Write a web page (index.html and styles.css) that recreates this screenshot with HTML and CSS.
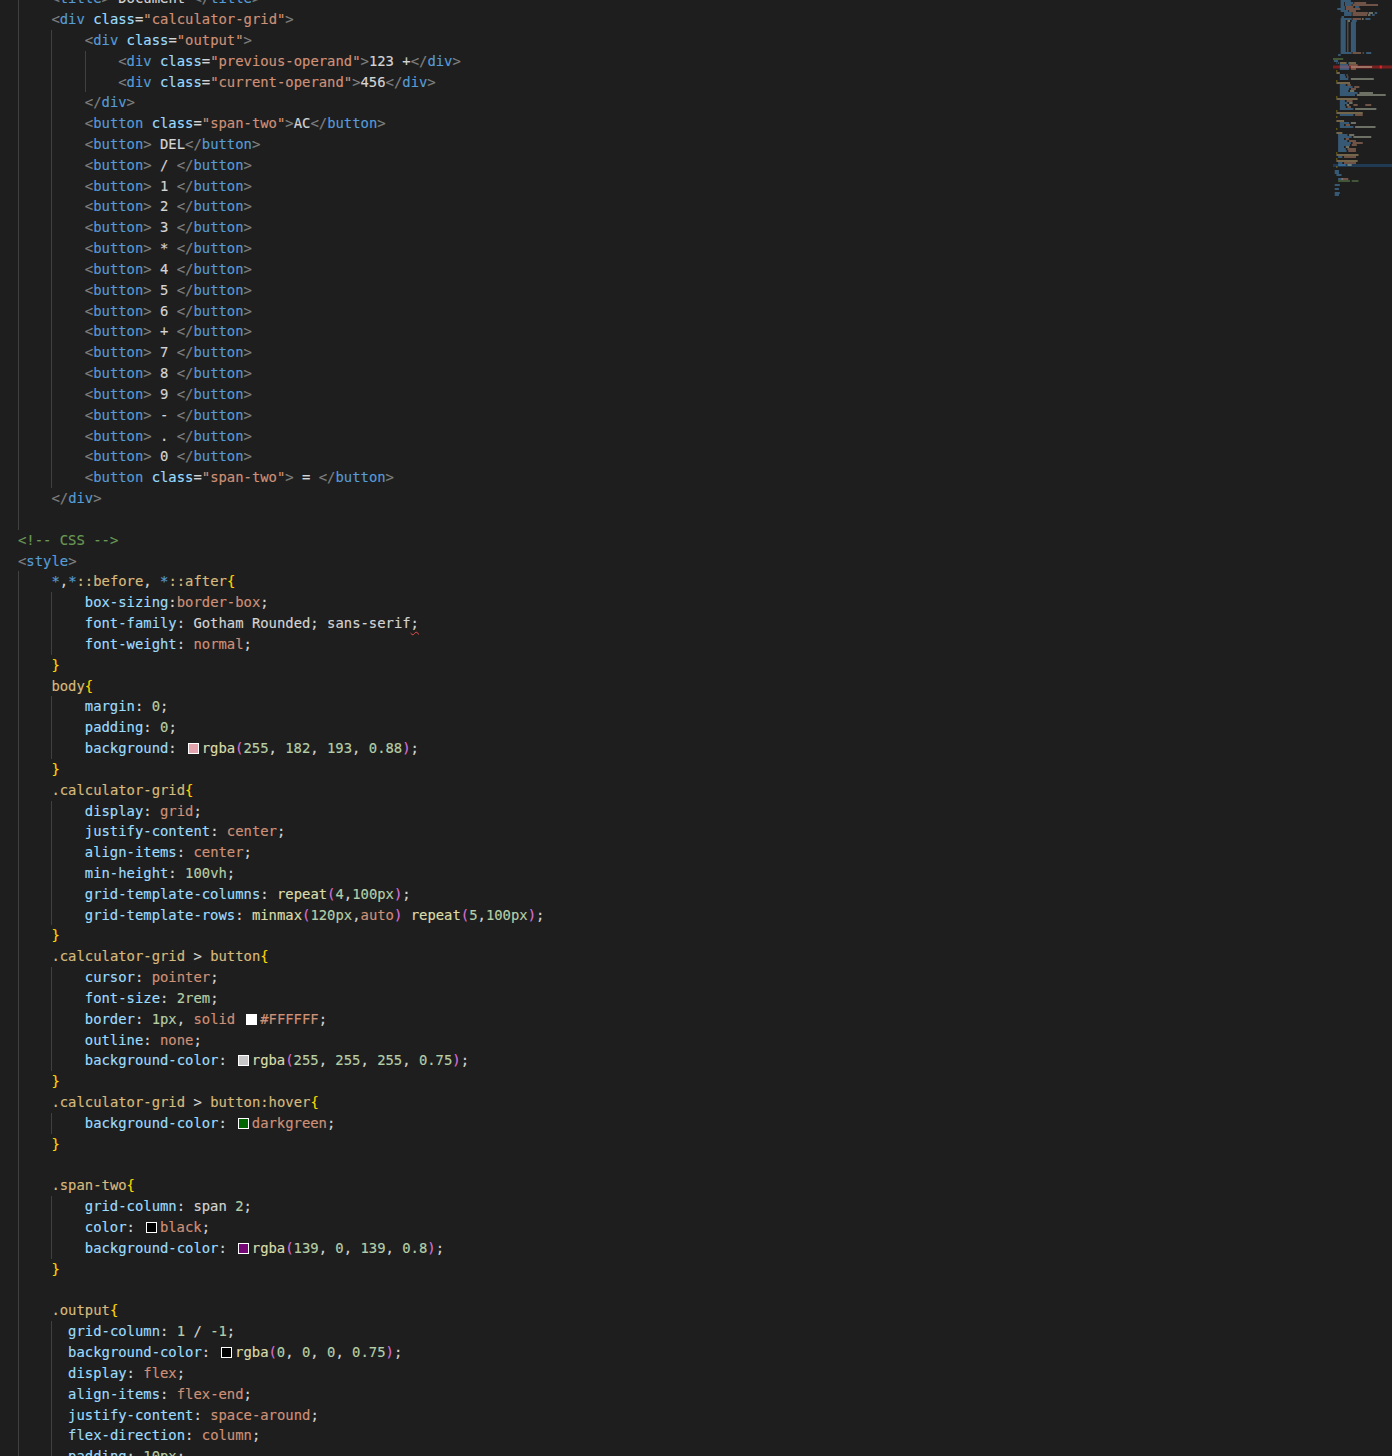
FILE: index.html
```html
<!DOCTYPE html>
<html lang="en">
<head>
<meta charset="utf-8">
<title>Document</title>
<link rel="stylesheet" href="styles.css">
</head>
<body>
<main class="editor">
<div class="code">
<div class="line"><i class="g"></i><i class="t">&lt;</i><i class="n">title</i><i class="t">&gt;</i> Document <i class="t">&lt;/</i><i class="n">title</i><i class="t">&gt;</i></div>
<div class="line"><i class="g"></i><i class="t">&lt;</i><i class="n">div</i> <i class="a">class</i>=<i class="s">"calculator-grid"</i><i class="t">&gt;</i></div>
<div class="line"><i class="g"></i><i class="g"></i><i class="t">&lt;</i><i class="n">div</i> <i class="a">class</i>=<i class="s">"output"</i><i class="t">&gt;</i></div>
<div class="line"><i class="g"></i><i class="g"></i><i class="g"></i><i class="t">&lt;</i><i class="n">div</i> <i class="a">class</i>=<i class="s">"previous-operand"</i><i class="t">&gt;</i>123 +<i class="t">&lt;/</i><i class="n">div</i><i class="t">&gt;</i></div>
<div class="line"><i class="g"></i><i class="g"></i><i class="g"></i><i class="t">&lt;</i><i class="n">div</i> <i class="a">class</i>=<i class="s">"current-operand"</i><i class="t">&gt;</i>456<i class="t">&lt;/</i><i class="n">div</i><i class="t">&gt;</i></div>
<div class="line"><i class="g"></i><i class="g"></i><i class="t">&lt;/</i><i class="n">div</i><i class="t">&gt;</i></div>
<div class="line"><i class="g"></i><i class="g"></i><i class="t">&lt;</i><i class="n">button</i> <i class="a">class</i>=<i class="s">"span-two"</i><i class="t">&gt;</i>AC<i class="t">&lt;/</i><i class="n">button</i><i class="t">&gt;</i></div>
<div class="line"><i class="g"></i><i class="g"></i><i class="t">&lt;</i><i class="n">button</i><i class="t">&gt;</i> DEL<i class="t">&lt;/</i><i class="n">button</i><i class="t">&gt;</i></div>
<div class="line"><i class="g"></i><i class="g"></i><i class="t">&lt;</i><i class="n">button</i><i class="t">&gt;</i> / <i class="t">&lt;/</i><i class="n">button</i><i class="t">&gt;</i></div>
<div class="line"><i class="g"></i><i class="g"></i><i class="t">&lt;</i><i class="n">button</i><i class="t">&gt;</i> 1 <i class="t">&lt;/</i><i class="n">button</i><i class="t">&gt;</i></div>
<div class="line"><i class="g"></i><i class="g"></i><i class="t">&lt;</i><i class="n">button</i><i class="t">&gt;</i> 2 <i class="t">&lt;/</i><i class="n">button</i><i class="t">&gt;</i></div>
<div class="line"><i class="g"></i><i class="g"></i><i class="t">&lt;</i><i class="n">button</i><i class="t">&gt;</i> 3 <i class="t">&lt;/</i><i class="n">button</i><i class="t">&gt;</i></div>
<div class="line"><i class="g"></i><i class="g"></i><i class="t">&lt;</i><i class="n">button</i><i class="t">&gt;</i> * <i class="t">&lt;/</i><i class="n">button</i><i class="t">&gt;</i></div>
<div class="line"><i class="g"></i><i class="g"></i><i class="t">&lt;</i><i class="n">button</i><i class="t">&gt;</i> 4 <i class="t">&lt;/</i><i class="n">button</i><i class="t">&gt;</i></div>
<div class="line"><i class="g"></i><i class="g"></i><i class="t">&lt;</i><i class="n">button</i><i class="t">&gt;</i> 5 <i class="t">&lt;/</i><i class="n">button</i><i class="t">&gt;</i></div>
<div class="line"><i class="g"></i><i class="g"></i><i class="t">&lt;</i><i class="n">button</i><i class="t">&gt;</i> 6 <i class="t">&lt;/</i><i class="n">button</i><i class="t">&gt;</i></div>
<div class="line"><i class="g"></i><i class="g"></i><i class="t">&lt;</i><i class="n">button</i><i class="t">&gt;</i> + <i class="t">&lt;/</i><i class="n">button</i><i class="t">&gt;</i></div>
<div class="line"><i class="g"></i><i class="g"></i><i class="t">&lt;</i><i class="n">button</i><i class="t">&gt;</i> 7 <i class="t">&lt;/</i><i class="n">button</i><i class="t">&gt;</i></div>
<div class="line"><i class="g"></i><i class="g"></i><i class="t">&lt;</i><i class="n">button</i><i class="t">&gt;</i> 8 <i class="t">&lt;/</i><i class="n">button</i><i class="t">&gt;</i></div>
<div class="line"><i class="g"></i><i class="g"></i><i class="t">&lt;</i><i class="n">button</i><i class="t">&gt;</i> 9 <i class="t">&lt;/</i><i class="n">button</i><i class="t">&gt;</i></div>
<div class="line"><i class="g"></i><i class="g"></i><i class="t">&lt;</i><i class="n">button</i><i class="t">&gt;</i> - <i class="t">&lt;/</i><i class="n">button</i><i class="t">&gt;</i></div>
<div class="line"><i class="g"></i><i class="g"></i><i class="t">&lt;</i><i class="n">button</i><i class="t">&gt;</i> . <i class="t">&lt;/</i><i class="n">button</i><i class="t">&gt;</i></div>
<div class="line"><i class="g"></i><i class="g"></i><i class="t">&lt;</i><i class="n">button</i><i class="t">&gt;</i> 0 <i class="t">&lt;/</i><i class="n">button</i><i class="t">&gt;</i></div>
<div class="line"><i class="g"></i><i class="g"></i><i class="t">&lt;</i><i class="n">button</i> <i class="a">class</i>=<i class="s">"span-two"</i><i class="t">&gt;</i> = <i class="t">&lt;/</i><i class="n">button</i><i class="t">&gt;</i></div>
<div class="line"><i class="g"></i><i class="t">&lt;/</i><i class="n">div</i><i class="t">&gt;</i></div>
<div class="line"><i class="g"></i></div>
<div class="line"><i class="c">&lt;!-- CSS --&gt;</i></div>
<div class="line"><i class="t">&lt;</i><i class="n">style</i><i class="t">&gt;</i></div>
<div class="line"><i class="g"></i><i class="n">*</i>,<i class="n">*</i><i class="l">::before</i>, <i class="n">*</i><i class="l">::after</i><i class="b">{</i></div>
<div class="line"><i class="g"></i><i class="g"></i><i class="a">box-sizing</i>:<i class="s">border-box</i>;</div>
<div class="line"><i class="g"></i><i class="g"></i><i class="a">font-family</i>: Gotham Rounded; sans-serif<i class="err">;</i></div>
<div class="line"><i class="g"></i><i class="g"></i><i class="a">font-weight</i>: <i class="s">normal</i>;</div>
<div class="line"><i class="g"></i><i class="b">}</i></div>
<div class="line"><i class="g"></i><i class="l">body</i><i class="b">{</i></div>
<div class="line"><i class="g"></i><i class="g"></i><i class="a">margin</i>: <i class="d">0</i>;</div>
<div class="line"><i class="g"></i><i class="g"></i><i class="a">padding</i>: <i class="d">0</i>;</div>
<div class="line"><i class="g"></i><i class="g"></i><i class="a">background</i>: <i class="sw sw-pink"></i><i class="f">rgba</i><i class="r">(</i><i class="d">255</i>, <i class="d">182</i>, <i class="d">193</i>, <i class="d">0.88</i><i class="r">)</i>;</div>
<div class="line"><i class="g"></i><i class="b">}</i></div>
<div class="line"><i class="g"></i><i class="l">.calculator-grid</i><i class="b">{</i></div>
<div class="line"><i class="g"></i><i class="g"></i><i class="a">display</i>: <i class="s">grid</i>;</div>
<div class="line"><i class="g"></i><i class="g"></i><i class="a">justify-content</i>: <i class="s">center</i>;</div>
<div class="line"><i class="g"></i><i class="g"></i><i class="a">align-items</i>: <i class="s">center</i>;</div>
<div class="line"><i class="g"></i><i class="g"></i><i class="a">min-height</i>: <i class="d">100vh</i>;</div>
<div class="line"><i class="g"></i><i class="g"></i><i class="a">grid-template-columns</i>: <i class="f">repeat</i><i class="r">(</i><i class="d">4</i>,<i class="d">100px</i><i class="r">)</i>;</div>
<div class="line"><i class="g"></i><i class="g"></i><i class="a">grid-template-rows</i>: <i class="f">minmax</i><i class="r">(</i><i class="d">120px</i>,<i class="s">auto</i><i class="r">)</i> <i class="f">repeat</i><i class="r">(</i><i class="d">5</i>,<i class="d">100px</i><i class="r">)</i>;</div>
<div class="line"><i class="g"></i><i class="b">}</i></div>
<div class="line"><i class="g"></i><i class="l">.calculator-grid</i> &gt; <i class="l">button</i><i class="b">{</i></div>
<div class="line"><i class="g"></i><i class="g"></i><i class="a">cursor</i>: <i class="s">pointer</i>;</div>
<div class="line"><i class="g"></i><i class="g"></i><i class="a">font-size</i>: <i class="d">2rem</i>;</div>
<div class="line"><i class="g"></i><i class="g"></i><i class="a">border</i>: <i class="d">1px</i>, <i class="s">solid</i> <i class="sw sw-white"></i><i class="s">#FFFFFF</i>;</div>
<div class="line"><i class="g"></i><i class="g"></i><i class="a">outline</i>: <i class="s">none</i>;</div>
<div class="line"><i class="g"></i><i class="g"></i><i class="a">background-color</i>: <i class="sw sw-grey"></i><i class="f">rgba</i><i class="r">(</i><i class="d">255</i>, <i class="d">255</i>, <i class="d">255</i>, <i class="d">0.75</i><i class="r">)</i>;</div>
<div class="line"><i class="g"></i><i class="b">}</i></div>
<div class="line"><i class="g"></i><i class="l">.calculator-grid</i> &gt; <i class="l">button:hover</i><i class="b">{</i></div>
<div class="line"><i class="g"></i><i class="g"></i><i class="a">background-color</i>: <i class="sw sw-green"></i><i class="s">darkgreen</i>;</div>
<div class="line"><i class="g"></i><i class="b">}</i></div>
<div class="line"><i class="g"></i></div>
<div class="line"><i class="g"></i><i class="l">.span-two</i><i class="b">{</i></div>
<div class="line"><i class="g"></i><i class="g"></i><i class="a">grid-column</i>: span <i class="d">2</i>;</div>
<div class="line"><i class="g"></i><i class="g"></i><i class="a">color</i>: <i class="sw sw-black"></i><i class="s">black</i>;</div>
<div class="line"><i class="g"></i><i class="g"></i><i class="a">background-color</i>: <i class="sw sw-purple"></i><i class="f">rgba</i><i class="r">(</i><i class="d">139</i>, <i class="d">0</i>, <i class="d">139</i>, <i class="d">0.8</i><i class="r">)</i>;</div>
<div class="line"><i class="g"></i><i class="b">}</i></div>
<div class="line"><i class="g"></i></div>
<div class="line"><i class="g"></i><i class="l">.output</i><i class="b">{</i></div>
<div class="line"><i class="g"></i><i class="g g2"></i><i class="a">grid-column</i>: <i class="d">1</i> / <i class="d">-1</i>;</div>
<div class="line"><i class="g"></i><i class="g g2"></i><i class="a">background-color</i>: <i class="sw sw-black"></i><i class="f">rgba</i><i class="r">(</i><i class="d">0</i>, <i class="d">0</i>, <i class="d">0</i>, <i class="d">0.75</i><i class="r">)</i>;</div>
<div class="line"><i class="g"></i><i class="g g2"></i><i class="a">display</i>: <i class="s">flex</i>;</div>
<div class="line"><i class="g"></i><i class="g g2"></i><i class="a">align-items</i>: <i class="s">flex-end</i>;</div>
<div class="line"><i class="g"></i><i class="g g2"></i><i class="a">justify-content</i>: <i class="s">space-around</i>;</div>
<div class="line"><i class="g"></i><i class="g g2"></i><i class="a">flex-direction</i>: <i class="s">column</i>;</div>
<div class="line"><i class="g"></i><i class="g g2"></i><i class="a">padding</i>: <i class="d">10px</i>;</div>
</div>
<svg class="minimap" width="59" height="200" viewBox="0 0 69.4 200" preserveAspectRatio="none" aria-hidden="true">
<rect class="m-err" x="0" y="65.5" width="69.4" height="3"/>
<rect class="m-errdot" x="55" y="65.5" width="2.4" height="3"/>
<rect class="m-sel" x="0" y="164" width="69.4" height="3"/>
<defs><g id="mb"><path class="m1" d="M9 0h6M21 0h6"/><path class="m3" d="M17 0h1"/></g></defs>
<path class="m1" d="M9 1h12M9 3h4M14 3h10M9 5h4M14 5h8M9 7h5M26 7h5M5 9h9M9 11h9M13 13h9M49 13h3M13 15h9M46 15h3M10 17h3M9 19h13M38 19h6M9 21h6M22 21h6M9 53h13M39 53h6M6 55h3M1 61h5M4 63h1M6 63h1M18 63h1M8 65h10M8 67h11M8 69h11M8 75h6M8 77h7M8 79h10M8 85h7M8 87h15M8 89h11M8 91h10M8 93h21M8 95h18M8 101h6M8 103h9M8 105h6M8 107h7M8 109h16M8 115h16M8 123h11M8 125h5M8 127h16M6 135h11M6 137h16M6 139h7M6 141h11M6 143h15M6 145h14M6 147h7M6 149h9M6 151h10M6 157h5M6 163h5M6 165h9M2 171h5M2 173h5M4 175h6M6 179h6M2 185h6M2 189h5M2 193h6M2 195h5"/>
<path class="m2" d="M25 3h14M23 5h30M15 7h9M15 9h17M19 11h8M23 13h18M23 15h17M23 19h10M23 53h10M19 65h10M21 69h6M17 85h4M25 87h6M21 89h6M16 101h7M24 105h5M38 105h7M17 107h4M26 115h9M15 125h5M13 157h14M13 163h14M15 139h4M19 141h8M23 143h12M22 145h6M17 149h10M18 151h9M10 179h8"/>
<path class="m3" d="M42 13h5M41 15h3M34 19h2M17 21h3M35 53h1M21 67h25M21 79h27M16 75h1M17 77h1M20 91h5M31 93h16M28 95h34M19 103h4M16 105h3M26 109h25M26 127h24M21 123h6M19 135h6M24 137h21M15 147h4M17 165h5"/>
<path class="m4" d="M8 63h8M19 63h8M4 73h4M4 83h16M4 99h25M4 113h31M4 121h9M4 133h7M4 155h26M4 161h25"/>
<path class="m5" d="M4 71h1M4 81h1M4 97h1M4 111h1M4 117h1M4 129h1M4 153h1M4 159h1M4 167h1"/>
<path class="m6" d="M0 59h12M6 181h14M22 181h8"/>
<use href="#mb" y="23"/><use href="#mb" y="25"/><use href="#mb" y="27"/><use href="#mb" y="29"/><use href="#mb" y="31"/><use href="#mb" y="33"/><use href="#mb" y="35"/><use href="#mb" y="37"/><use href="#mb" y="39"/><use href="#mb" y="41"/><use href="#mb" y="43"/><use href="#mb" y="45"/><use href="#mb" y="47"/><use href="#mb" y="49"/><use href="#mb" y="51"/>
</svg>
</main>
</body>
</html>
```
FILE: styles.css
```css
html, body {
  margin: 0;
  padding: 0;
  height: 1456px;
  overflow: hidden;
  background: #1e1e1e;
}

.editor {
  position: relative;
  height: 1456px;
  overflow: hidden;
}

.code {
  margin-top: -11.8px;
  padding-left: 18px;
  font-family: "DejaVu Sans Mono", monospace;
  font-size: 13.88px;
  color: #d4d4d4;
  -webkit-text-stroke: 0.15px;
}

.line {
  height: 20.84px;
  line-height: 20.84px;
  white-space: pre;
}

.line i {
  font-style: normal;
}

.g {
  display: inline-block;
  box-sizing: border-box;
  width: 4ch;
  height: 20.84px;
  vertical-align: top;
  border-left: 1px solid #404040;
}

.g2 { width: 2ch; }

.t { color: #808080; }
.n { color: #569cd6; }
.a { color: #9cdcfe; }
.s { color: #ce9178; }
.c { color: #6a9955; }
.l { color: #d7ba7d; }
.b { color: #ffd700; }
.d { color: #b5cea8; }
.f { color: #dcdcaa; }
.r { color: #da70d6; }

.err {
  text-decoration: underline wavy #f14c4c 1px;
  text-underline-offset: 3px;
}

.sw {
  display: inline-block;
  box-sizing: border-box;
  width: 11px;
  height: 11px;
  margin: 0 3px 0 2.6px;
  border: 1px solid #fff;
  vertical-align: -1px;
}

.sw-pink { background: rgba(255, 182, 193, 0.88); }
.sw-white { background: #fff; }
.sw-grey { background: rgba(255, 255, 255, 0.75); }
.sw-green { background: darkgreen; }
.sw-black { background: #000; }
.sw-purple { background: rgba(139, 0, 139, 0.8); }

.minimap {
  position: absolute;
  top: 0;
  right: 0;
  filter: blur(0.3px);
}

.minimap path {
  fill: none;
  stroke-width: 1.5;
  opacity: 0.62;
}

.m1 { stroke: #569cd6; }
.m2 { stroke: #ce9178; }
.m3 { stroke: #c8d0b8; }
.m4 { stroke: #d7ba7d; }
.m5 { stroke: #ffd700; }
.m6 { stroke: #6a9955; }
.m-err { fill: #7a1f1f; }
.m-errdot { fill: #d62a2a; }
.m-sel { fill: #1f3a52; }
```
